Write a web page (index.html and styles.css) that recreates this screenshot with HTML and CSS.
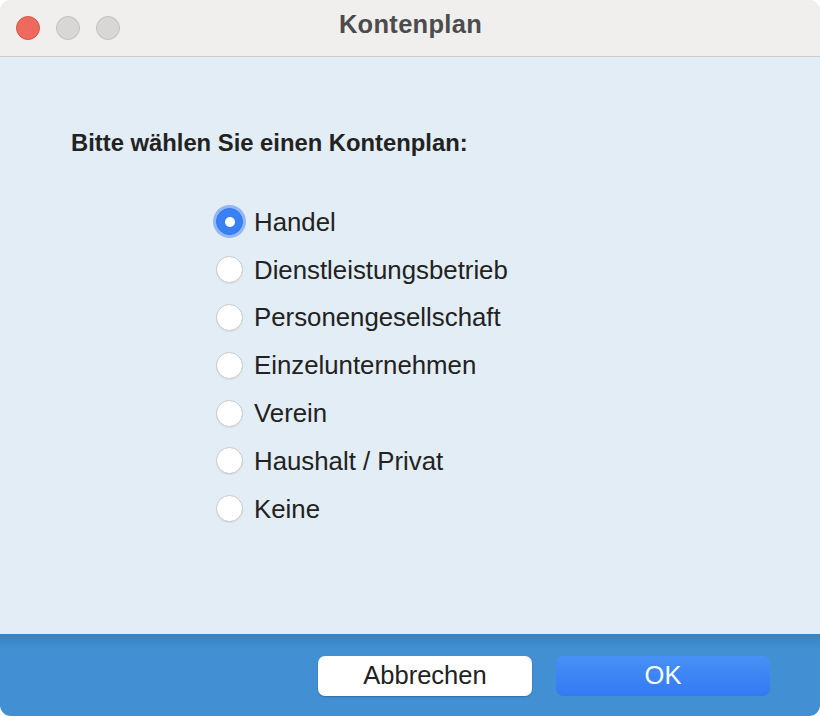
FILE: index.html
```html
<!DOCTYPE html>
<html lang="de">
<head>
<meta charset="utf-8">
<title>Kontenplan</title>
<link rel="stylesheet" href="styles.css">
</head>
<body>
<div class="window">
  <header class="titlebar">
    <div class="lights">
      <span class="light close"></span>
      <span class="light"></span>
      <span class="light"></span>
    </div>
    <div class="title">Kontenplan</div>
  </header>
  <main class="content">
    <h1 class="prompt">Bitte wählen Sie einen Kontenplan:</h1>
    <ul class="options">
      <li class="option"><span class="radio checked focused"></span><span class="label">Handel</span></li>
      <li class="option"><span class="radio"></span><span class="label">Dienstleistungsbetrieb</span></li>
      <li class="option"><span class="radio"></span><span class="label">Personengesellschaft</span></li>
      <li class="option"><span class="radio"></span><span class="label">Einzelunternehmen</span></li>
      <li class="option"><span class="radio"></span><span class="label">Verein</span></li>
      <li class="option"><span class="radio"></span><span class="label">Haushalt / Privat</span></li>
      <li class="option"><span class="radio"></span><span class="label">Keine</span></li>
    </ul>
  </main>
  <footer class="footer">
    <button class="btn cancel">Abbrechen</button>
    <button class="btn ok">OK</button>
  </footer>
</div>
</body>
</html>
```
FILE: styles.css
```css
html, body {
  margin: 0;
  padding: 0;
  background: #ffffff;
}
body {
  font-family: "Liberation Sans", Arial, sans-serif;
}
.window {
  width: 820px;
  height: 716px;
  border-radius: 11px;
  overflow: hidden;
  display: flex;
  flex-direction: column;
  background: #e3edf6;
}
.titlebar {
  height: 56px;
  flex: none;
  background: #f0efee;
  border-bottom: 1px solid #cdcdcd;
  position: relative;
  display: flex;
  align-items: flex-start;
  justify-content: center;
}
.lights {
  position: absolute;
  left: 16px;
  top: 16px;
  display: flex;
  gap: 16px;
}
.light {
  width: 22px;
  height: 22px;
  border-radius: 50%;
  background: #d8d7d6;
  border: 1px solid #c2c1c0;
}
.light.close {
  background: #ee6a5e;
  border-color: #d4564b;
}
.title {
  font-weight: bold;
  font-size: 25.5px;
  letter-spacing: 0.3px;
  color: #4c4c4c;
  line-height: 30px;
  margin: 9px 0 0 1px;
}
.content {
  flex: 1;
  padding: 72px 0 0 71px;
}
.prompt {
  margin: 0;
  font-size: 23.8px;
  font-weight: bold;
  color: #222222;
  line-height: 28px;
}
.options {
  list-style: none;
  margin: 41px 0 0 145px;
  padding: 0;
}
.option {
  height: 47.8px;
  display: flex;
  align-items: center;
  gap: 11px;
}
.radio {
  width: 27px;
  height: 27px;
  box-sizing: border-box;
  border-radius: 50%;
  background: #ffffff;
  border: 1px solid #c9c9c9;
  box-shadow: 0 1px 1px rgba(0,0,0,0.06);
  flex: none;
  position: relative;
}
.radio.checked {
  background: #3a80f4;
  border-color: #3477ea;
}
.radio.checked::after {
  content: "";
  position: absolute;
  left: 7.5px;
  top: 7.5px;
  width: 10px;
  height: 10px;
  border-radius: 50%;
  background: #ffffff;
}
.radio.focused {
  box-shadow: 0 0 0 3px rgba(80, 140, 240, 0.55);
}
.label {
  font-size: 25.8px;
  color: #222222;
  line-height: 30px;
}
.footer {
  height: 82px;
  flex: none;
  background: linear-gradient(#3a83c3, #4290d3 20%, #4290d3);
  display: flex;
  align-items: flex-start;
  padding: 22px 0 0 318px;
  box-sizing: border-box;
  gap: 24px;
}
.btn {
  width: 214px;
  height: 40px;
  border-radius: 7px;
  border: none;
  font-family: "Liberation Sans", Arial, sans-serif;
  font-size: 25.5px;
  padding: 0 0 2px 0;
}
.cancel {
  background: #ffffff;
  color: #222222;
  box-shadow: 0 1px 2px rgba(0,0,0,0.25);
}
.ok {
  background: linear-gradient(#4691f6, #3479f3);
  color: #ffffff;
}
```
